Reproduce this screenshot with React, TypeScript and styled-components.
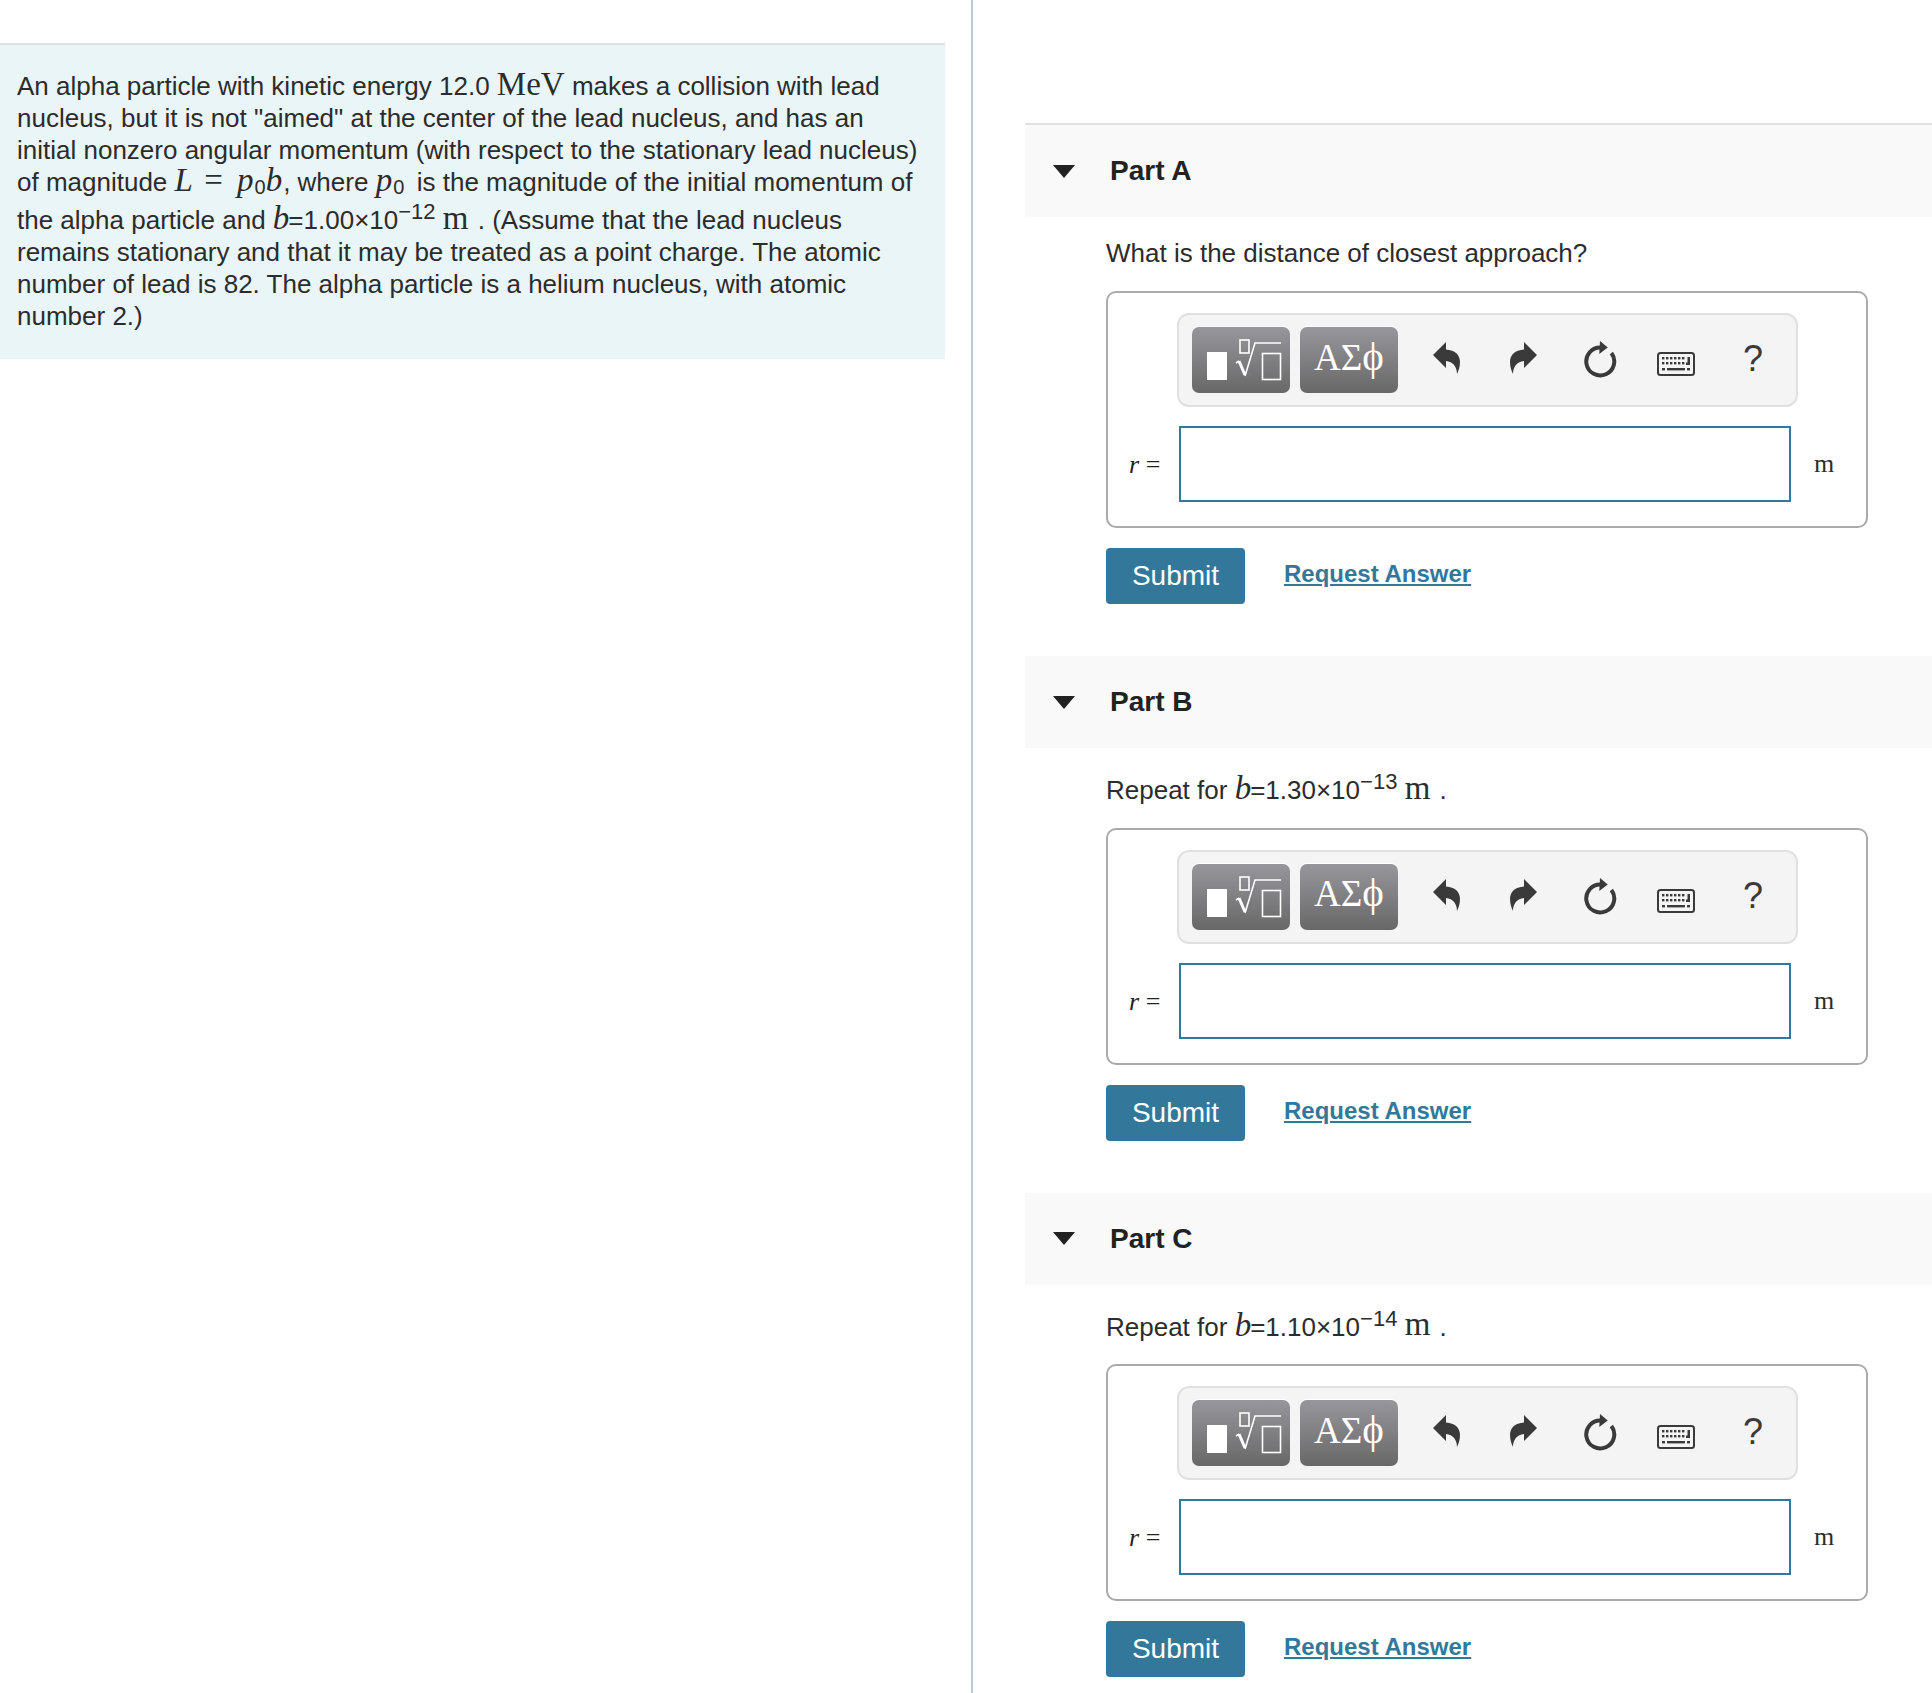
import { ReactNode } from "react";
import styled, { createGlobalStyle } from "styled-components";

const GlobalStyle = createGlobalStyle`
  html, body {
    margin: 0;
    padding: 0;
    background: #fff;
  }
  body {
    font-family: "Liberation Sans", Arial, sans-serif;
    color: #2c2c2c;
  }
`;

function UndoIcon() {
  return (
    <svg width="27" height="32" viewBox="0 0 27 32">
      <path
        fill="#3a3a3a"
        d="M0 13 L13 0 L13 7.5 C22 8 27 13 27 20 C27 25 25.5 29 24 32 C24 25 20 19.5 13 19 L13 26 Z"
      />
    </svg>
  );
}

function RedoIcon() {
  return (
    <svg width="27" height="32" viewBox="0 0 27 32">
      <path
        fill="#3a3a3a"
        d="M27 13 L14 0 L14 7.5 C5 8 0 13 0 20 C0 25 1.5 29 3 32 C3 25 7 19.5 14 19 L14 26 Z"
      />
    </svg>
  );
}

function ResetIcon() {
  return (
    <svg width="34" height="38" viewBox="0 0 34 38">
      <path fill="none" stroke="#3a3a3a" strokeWidth="4" d="M18 6.5 A14 14 0 1 0 28.4 12" />
      <path fill="#3a3a3a" d="M17 0 L24.7 6.5 L16.3 13 Z" />
    </svg>
  );
}

function KeyboardIcon() {
  const keys = [5, 9, 13, 17, 21, 25];
  return (
    <svg width="38" height="24" viewBox="0 0 38 24">
      <rect x="1" y="1" width="36" height="22" rx="2.5" fill="#f4f4f4" stroke="#3a3a3a" strokeWidth="2" />
      {keys.map((x) => (
        <rect key={x} x={x} y="5" width="2.4" height="2.4" fill="#3a3a3a" />
      ))}
      {keys.map((x) => (
        <rect key={x} x={x} y="10" width="2.4" height="2.4" fill="#3a3a3a" />
      ))}
      <path fill="#3a3a3a" d="M30.5 5 H33 V13 H29 V10.5 H30.5 Z" />
      <rect x="5" y="16" width="3" height="2.4" fill="#3a3a3a" />
      <rect x="10" y="16" width="18" height="2.4" fill="#3a3a3a" />
      <rect x="30" y="16" width="3" height="2.4" fill="#3a3a3a" />
    </svg>
  );
}

function TemplatesIcon() {
  return (
    <svg width="76" height="42" viewBox="0 0 76 42">
      <rect x="0" y="13" width="20" height="28" fill="#fff" />
      <rect x="33" y="1" width="9" height="13" fill="none" stroke="#fff" strokeWidth="1.6" />
      <path d="M29 24 L32 22" fill="none" stroke="#fff" strokeWidth="1.6" />
      <path d="M32 22 L38 36" fill="none" stroke="#fff" strokeWidth="3" />
      <path d="M38 37 L48 4 H74" fill="none" stroke="#fff" strokeWidth="1.6" />
      <rect x="55.5" y="14.5" width="18" height="26" fill="none" stroke="#fff" strokeWidth="1.6" />
    </svg>
  );
}

function Toolbar() {
  return (
    <ToolbarWrap>
      <MathButton>
        <TemplatesGlyph>
          <TemplatesIcon />
        </TemplatesGlyph>
      </MathButton>
      <MathButton>
        <SymbolsLabel>
          ΑΣ<PhiGlyph>ϕ</PhiGlyph>
        </SymbolsLabel>
      </MathButton>
      <ToolSlot $shift={-2}>
        <UndoIcon />
      </ToolSlot>
      <ToolSlot $shift={-2}>
        <RedoIcon />
      </ToolSlot>
      <ToolSlot>
        <ResetIcon />
      </ToolSlot>
      <ToolSlot $shift={4}>
        <KeyboardIcon />
      </ToolSlot>
      <ToolSlot>
        <HelpMark>?</HelpMark>
      </ToolSlot>
    </ToolbarWrap>
  );
}

function Part({ name, prompt }: { name: string; prompt: ReactNode }) {
  return (
    <section>
      <PartHeader>
        <Caret />
        <PartTitle>{name}</PartTitle>
      </PartHeader>
      <PartBody>
        <Prompt>{prompt}</Prompt>
        <AnswerBox>
          <Toolbar />
          <InputRow>
            <VarLabel>
              <i>r</i> =
            </VarLabel>
            <AnswerInput />
            <UnitLabel>m</UnitLabel>
          </InputRow>
        </AnswerBox>
        <Actions>
          <SubmitButton>Submit</SubmitButton>
          <RequestLink href="#">Request Answer</RequestLink>
        </Actions>
      </PartBody>
    </section>
  );
}

function RepeatPrompt({ value, exp }: { value: string; exp: string }) {
  return (
    <>
      Repeat for <MathVar $tight>b</MathVar>={value}×10<Sup>−{exp}</Sup> <MathUnit>m</MathUnit> .
    </>
  );
}

export default function App() {
  return (
    <Page>
      <GlobalStyle />
      <LeftColumn>
        <ProblemPanel>
          An alpha particle with kinetic energy 12.0 <MathRoman>MeV</MathRoman> makes a collision with lead nucleus,
          but it is not "aimed" at the center of the lead nucleus, and has an initial nonzero angular momentum (with
          respect to the stationary lead nucleus) of magnitude <MathVar>L</MathVar> <Equals>=</Equals>{" "}
          <MathVar>p</MathVar>
          <Sub>0</Sub>
          <MathVar>b</MathVar>, where <MathVar>p</MathVar>
          <Sub $gap={-2}>0</Sub>&nbsp; is the magnitude of the initial momentum of the alpha particle and{" "}
          <MathVar $tight>b</MathVar>=1.00×10<Sup>−12</Sup> <MathUnit>m</MathUnit> . (Assume that the lead nucleus
          remains stationary and that it may be treated as a point charge. The atomic number of lead is 82. The alpha
          particle is a helium nucleus, with atomic number 2.)
        </ProblemPanel>
      </LeftColumn>
      <RightColumn>
        <Part name="Part A" prompt="What is the distance of closest approach?" />
        <Part name="Part B" prompt={<RepeatPrompt value="1.30" exp="13" />} />
        <Part name="Part C" prompt={<RepeatPrompt value="1.10" exp="14" />} />
      </RightColumn>
    </Page>
  );
}

const Page = styled.div`
  display: flex;
  height: 1693px;
  overflow: hidden;
`;

const LeftColumn = styled.div`
  width: 971px;
  flex: none;
  border-right: 2px solid #b9c9dc;
  padding-top: 43px;
`;

const ProblemPanel = styled.div`
  width: 945px;
  box-sizing: border-box;
  background: #e9f5f7;
  border-top: 2px solid #e0e0e0;
  padding: 25px 17px 27px;
  font-size: 26px;
  line-height: 32px;
`;

const MathVar = styled.i<{ $tight?: boolean }>`
  font-family: "Liberation Serif", "Times New Roman", serif;
  font-size: 33px;
  line-height: 0;
  padding-right: ${(p) => (p.$tight ? 0 : 1)}px;
  letter-spacing: ${(p) => (p.$tight ? -1 : 0)}px;
`;

const MathRoman = styled.span`
  font-family: "Liberation Serif", "Times New Roman", serif;
  font-size: 33px;
  line-height: 0;
`;

const MathUnit = styled(MathRoman)`
  margin-right: 2px;
`;

const Equals = styled(MathRoman)`
  margin: 0 7px 0 3px;
`;

const Sub = styled.sub<{ $gap?: number }>`
  font-size: 20px;
  line-height: 0;
  vertical-align: -3px;
  margin-right: ${(p) => p.$gap ?? 0}px;
`;

const Sup = styled.sup`
  font-size: 22px;
  line-height: 28px;
`;

const RightColumn = styled.div`
  flex: 1;
  min-width: 0;
  padding: 123px 0 0 52px;
`;

const PartHeader = styled.div`
  display: flex;
  align-items: center;
  height: 92px;
  background: #f9f9f9;
  section:first-child & {
    border-top: 2px solid #e0e0e0;
  }
`;

const Caret = styled.span`
  width: 0;
  height: 0;
  margin-left: 28px;
  border-left: 11px solid transparent;
  border-right: 11px solid transparent;
  border-top: 13px solid #222;
`;

const PartTitle = styled.h2`
  margin: 0 0 0 35px;
  font-size: 28px;
  font-weight: 700;
  color: #222;
`;

const PartBody = styled.div`
  padding: 20px 0 52px 81px;
`;

const Prompt = styled.div`
  font-size: 26px;
  line-height: 32px;
  margin-bottom: 22px;

  sup {
    line-height: 27px;
  }
`;

const AnswerBox = styled.div`
  width: 762px;
  height: 237px;
  box-sizing: border-box;
  border: 2px solid #aaa;
  border-radius: 10px;
  padding: 20px 0 0 69px;
`;

const ToolbarWrap = styled.div`
  display: flex;
  align-items: center;
  width: 621px;
  height: 94px;
  box-sizing: border-box;
  padding-left: 13px;
  background: #f4f4f4;
  border: 2px solid #e0e0e0;
  border-radius: 12px;
`;

const MathButton = styled.div`
  display: flex;
  align-items: center;
  justify-content: center;
  width: 98px;
  height: 66px;
  margin-right: 10px;
  border-radius: 7px;
  background: linear-gradient(#97969c, #686868);
  box-shadow: 0 -1px 0 #fff;
  color: #fff;
  font-family: "Liberation Serif", "Times New Roman", serif;
  font-size: 37px;
`;

const TemplatesGlyph = styled.span`
  display: flex;
  margin-left: 8px;
`;

const SymbolsLabel = styled.span`
  margin-bottom: 6px;
`;

const PhiGlyph = styled.span`
  font-size: 41px;
  line-height: 0;
`;

const ToolSlot = styled.div<{ $shift?: number }>`
  display: flex;
  align-items: center;
  justify-content: center;
  width: 76.7px;
  flex: none;
  margin-top: ${(p) => (p.$shift ?? 0) * 2}px;
`;

const HelpMark = styled.span`
  font-size: 36px;
  color: #3a3a3a;
  margin-bottom: 2px;
`;

const InputRow = styled.div`
  display: flex;
  align-items: center;
  margin: 19px 0 0 -69px;
  padding-left: 21px;
`;

const VarLabel = styled.span`
  width: 50px;
  flex: none;
  margin-top: 2px;
  font-family: "Liberation Serif", "Times New Roman", serif;
  font-size: 26px;
  color: #222;
  white-space: nowrap;
`;

const AnswerInput = styled.div`
  width: 612px;
  height: 76px;
  flex: none;
  box-sizing: border-box;
  border: 2px solid #33789b;
  background: #fff;
`;

const UnitLabel = styled.span`
  margin-left: 23px;
  font-family: "Liberation Serif", "Times New Roman", serif;
  font-size: 26px;
`;

const Actions = styled.div`
  display: flex;
  align-items: center;
  margin-top: 20px;
`;

const SubmitButton = styled.button`
  width: 139px;
  height: 56px;
  padding: 0;
  border: 0;
  border-radius: 4px;
  background: #33789b;
  color: #fff;
  font-family: "Liberation Sans", Arial, sans-serif;
  font-size: 28px;
`;

const RequestLink = styled.a`
  margin: 0 0 4px 39px;
  font-size: 24px;
  font-weight: 700;
  color: #33789b;
  text-decoration: underline;
`;
